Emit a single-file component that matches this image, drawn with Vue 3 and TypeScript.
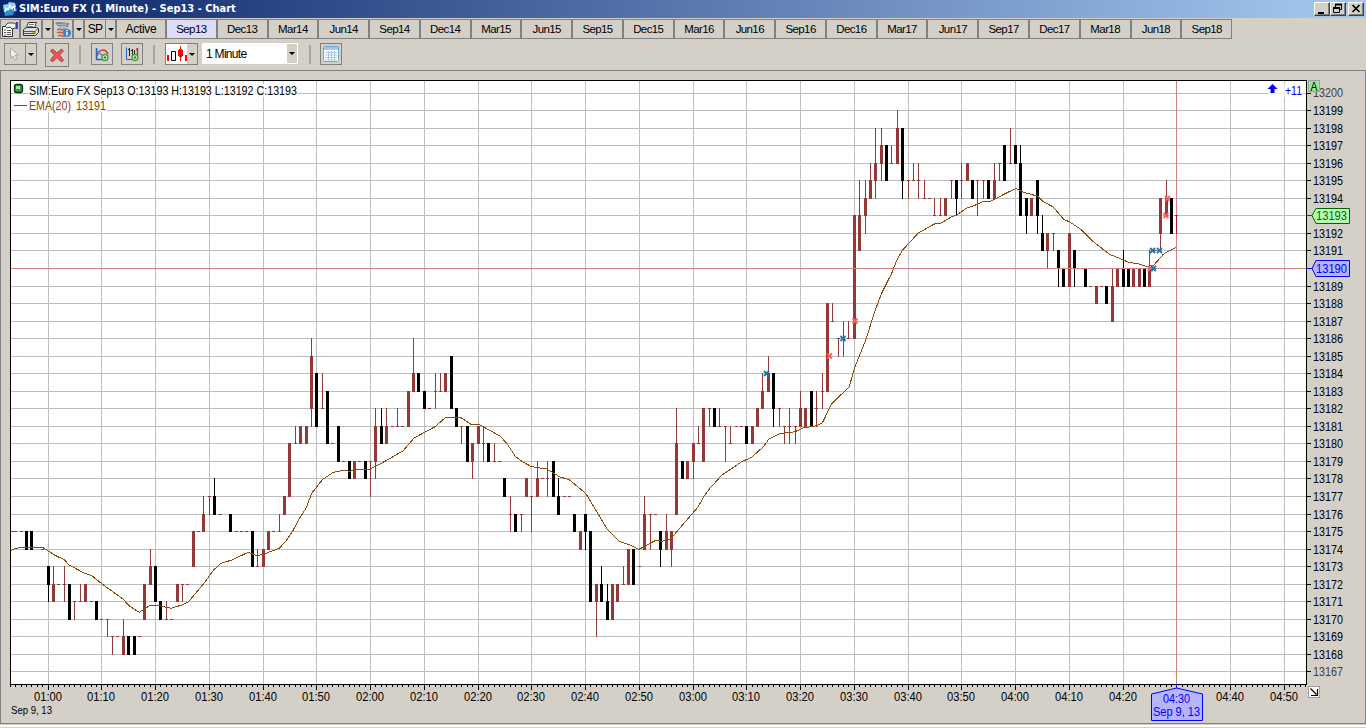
<script setup lang="ts">
type Kind = 'r' | 'b'
interface Candle { m: number; k: Kind; top: number; bot: number; hi: number; lo: number }

// minute:colour:body top-body bottom:high:low (prices above 13100, minutes since 01:00)
const raw = `-7r75 -6r75 -5r75 -4b75-74 -3b75-74 -1r74 0b73-72L71 1r72-71H73 2r72 3r72H73L71 4b72-70 5r71L70 6r71H72 7r72-71 8r71 9b71-70
10r70 11r70L69 12r69L68 13r69 14r69-68H70 15b69-68 16b69-68 17r69 18r72-70 19r73-72H74 20b73-71 21b71-70 22r70H71 23r70 24r72-71 25r72L71 26r72
27r75-73 28r75 29r76-75H77 30r77L76 31b77-76H78 32r76 34b76-75 35r75 36r75 37r75 38b75-73 39r73H74 40r74-73 41r75-74 42r75 43r75H76 44r77-76
45r80-77 46r80H81 47r81-80 48r81-80 49r85-82H86L81 50b84-81 51r82H84 52b83-80 53r80 54b81-79 55r79 56b79-78 57r79-78 58r79 59b79-78 60r79L77
61r81-79H82L78 62b81-80H82 63r81-80H82 64r81 65r81H82 66r81 67r83-81 68r84-83H86 69b84-83 70b83-82 71r82 72r83H84L82 73r83H84 74r84-83 75b85-82
76b82-81 77r81L80 78b81-79 79r80-79L78 80r81-80 81r80H81L79 82b80-79 83r79H80 84r79 85b78-77 86r76H77L75 87b76-75 88r76L75 89r78-77 90r77L75
91r78-77H79 92r78 93r78H79L77 94b79-77 95b77-76H78 96r77 97r77 98b76-75 99r75-74 100b76-75L74 101b75-71 102r72-71L69 103b72-71H73 104b71-70H72
105r72-70 106r72-71 107r72H73 108r74-72 109b74-72 110r73 111r76-74H77 112r76L74 113r76 114b75-74L73 115r75-74H76 116r75-74L73 117r80-76H82
118b79-78 119r79-78 120r80-79L78 121r80H81 122r82-79 123r82L81 124b82-81 125r81H82 126r81L79 127r80H81 128r81 129r81 130b81-80 131r81-80 132r82-81
133r83-82H84 134r84-83H85 135b84-82L81 136r82L81 137r81L80 138r81H82L80 139r81L80 140r82-81H83 141r82-81 142b83-81 143r82H83L81 144r83H84L82
145r88-83 146r87H88 147r86L85 148r86H87L85 149r86H87 150r93-86 151r93-91H95 152r94-93H95L92 153r95-94H96 154r96-95H98L94 155r97-96H98L95 156b97-95
157r96H97 158r98-96H99 159b98-95L94 160r95L94 161r95H96 162r95H96L94 163r94H95 164r94 165r93H94 166r93H94 167r94-93 168r95L94 169b95-94L93
170r95H96L94 171r96-95 172b95-94 173r95L93 174r95L94 175b95-94 176r95-94H96 177r96L95 178b97-95 179r96H98 180b97-96 181b96-93H97 182b94-93L92
183r94-93 184b95-93L92 185b92-91H93 186r92-91L90 187r92L91 188b91-90L89 189b90-89 190r92-89 191b91-90L89 192r90 193b90-89 194r89 195r89-88 196r89
197b89-88 198r89-87H90 199r90-89 200b90-89H91 201b90-89 202r90-89 203r90-89 204b90-89 205r90-89H91 206r91 207r94-92L91 208r94-93H95 209b94-92 210r93L92`

const candles: Candle[] = raw.split(/\s+/).map((s) => {
  const g = s.match(/^(-?\d+)([rb])(\d+)(?:-(\d+))?(?:H(\d+))?(?:L(\d+))?$/)!
  const top = +g[3]
  const bot = g[4] ? +g[4] : top
  return { m: +g[1], k: g[2] as Kind, top, bot, hi: g[5] ? +g[5] : top, lo: g[6] ? +g[6] : bot }
})

const X = (m: number): number => Math.floor(48 + 5.375 * m)
const Y = (p: number): number => Math.round(110.052 + (99 - p) * 17.545)

const ema = `10.7,550.7 15,548.7 20,547.4 42.7,547.4 55,555.3 64.3,559.7 68.7,564.7 83.3,572.7 91.7,575.7 101.7,583.7 123.3,599.3 129.3,606 139.3,612.3 150,605.4 158.3,605.4 171,608.3 182.7,604.7 188.3,602 204,583.3 213.3,570.3 220.7,563.3 231,560.3 248.3,552.3 256.7,555.7 263.3,554.3 279.3,548.3 286.7,540 293.3,530 299.7,518 306,508.3 311.7,493.3 322.3,479.7 333.3,472.3 343.3,470.3 350,471.3 360,469.3 368.3,470 376.7,465.7 386.7,460.3 403.3,450.7 414,438 435,426.7 445.7,417.4 460.7,417.4 471,424.3 480,425 500,436 506.7,443.3 515.7,456.7 523.3,462.3 531.7,466.7 546.7,469 560,477 569.3,479.7 586,493.7 607.3,529.3 619.3,541.3 630,545 639,549.3 655.7,540.3 661.7,541.3 671,538.7 677.3,531 698.3,506.7 703.7,496.7 710,488.3 721.7,475.3 741.7,461.7 751.7,457.3 763.3,446.7 769,439 779.3,433.7 795,431.7 803.3,428 816.7,425.7 822.3,423 831.7,403.7 849.3,386.7 854.3,368.7 865.7,340 875.3,310 881.5,293.5 891.7,273.3 897.3,259 902.7,250 918.3,233 935,223.7 941,223 951.7,216.7 956.7,215 966.7,208 973.3,206 982.7,201.7 990.7,201 1010,191.3 1016,188.5 1023.3,192.3 1037.3,196 1043.3,201.7 1053.3,207 1064,219.7 1069.3,221.7 1080.7,229.3 1093.3,241.7 1110,254.7 1118.3,257.7 1128.3,262.3 1138.3,263.7 1146.7,266.7 1154,265 1163.3,254.3 1167.3,251.7 1176.7,247.3`

const prices: number[] = Array.from({ length: 34 }, (_, i) => 100 - i)
const labelled: number[] = prices.filter((p) => p !== 93 && p !== 90)
const hours = Array.from({ length: 24 }, (_, i) => ({
  x: X(i * 10),
  label: `0${1 + Math.floor(i / 6)}:${i % 6}0`,
}))
const labelledHours = hours.filter((h) => h.label !== '04:30')
const minutes: number[] = Array.from({ length: 245 }, (_, i) => X(i - 7)).filter((x) => x < 1306)

const trades = [
  { x: 854.5, y: 320.5, c: 'sell' }, { x: 829, y: 355.5, c: 'sell' }, { x: 842.5, y: 338, c: 'buy' }, { x: 766, y: 373, c: 'buy' },
  { x: 1167, y: 198, c: 'sell' }, { x: 1165.5, y: 215, c: 'sell' }, { x: 1150, y: 268, c: 'sell' },
  { x: 1152, y: 250, c: 'buy' }, { x: 1159, y: 250, c: 'buy' }, { x: 1153, y: 268, c: 'buy' },
]

const tabs = ['Sep13', 'Dec13', 'Mar14', 'Jun14', 'Sep14', 'Dec14', 'Mar15', 'Jun15', 'Sep15', 'Dec15', 'Mar16', 'Jun16', 'Sep16', 'Dec16', 'Mar17', 'Jun17', 'Sep17', 'Dec17', 'Mar18', 'Jun18', 'Sep18']
</script>

<template>
  <div class="window">
    <header class="title">
      <svg class="logo" width="16" height="16" viewBox="0 0 16 16">
        <path d="M1 4l5-1 1-2 6 1 2 8-3 1-1 3-8 1z" fill="#2b8fd6" />
        <path d="M1 4l5-1 1-2 6 1 1 4-12 5z" fill="#8cc9f0" />
        <path d="M3 11l1-4 2 2 2-5 2 4 2-3 1 5" fill="none" stroke="#fff" stroke-width="1.2" />
      </svg>
      <h1>SIM:Euro FX (1 Minute) - Sep13 - Chart</h1>
      <div class="controls">
        <button><svg width="14" height="12" viewBox="0 0 14 12"><path d="M3 9h6v2H3z" /></svg></button>
        <button><svg width="14" height="12" viewBox="0 0 14 12" fill="none" stroke="#000"><path d="M4.500 4V1.500h6v5H9" /><path d="M4 1.500h7" stroke-width="2" /><path d="M2.500 5.500h6v4h-6z" /><path d="M2 5h7" stroke-width="2" /></svg></button>
        <button class="close"><svg width="14" height="12" viewBox="0 0 14 12"><path d="M3.500 2l7 7M10.500 2l-7 7" stroke="#000" stroke-width="1.700" /></svg></button>
      </div>
    </header>

    <nav class="tabs">
      <span class="tool w20"><svg width="18" height="18" viewBox="0 0 18 18">
        <path d="M1.500 6.500h10v10h-10z" fill="#fff" stroke="#333" /><path d="M3 10h2M3 12.500h2M3 15h2M6 10.500h4M6 12.500h4M6 14.500h4" stroke="#555" />
        <path d="M4 6l3-3h6l2 1v4l-4 1-2-2-3 1z" fill="#f4f4f4" stroke="#444" /><path d="M15 2h2v7h-2z" fill="#4040a8" />
      </svg></span>
      <span class="tool w21"><svg width="18" height="18" viewBox="0 0 18 18">
        <path d="M6.500 2.500h8l-2 5h-8z" fill="#fff" stroke="#333" /><path d="M7 4.500h5M6 6.500h5" stroke="#777" />
        <path d="M1.500 9.500l3-2h10l2 1v4l-3 3h-12z" fill="#ddd" stroke="#333" /><path d="M2 11.500h11l3-3M2 13.500h11v-2" fill="none" stroke="#555" /><path d="M10 12.500h2" stroke="#cc0" />
      </svg></span>
      <span class="tool arrow w11"><i /></span>
      <span class="tool w20"><svg width="18" height="18" viewBox="0 0 18 18">
        <path d="M1 3l4-1 10 1-1 4-7 2z" fill="#76838c" /><path d="M4 4.500l9-.500M5 6.500l8-.500" stroke="#b8c4cc" />
        <path d="M6 6l8 1v6l-7 1z" fill="#aebfd8" />
        <path d="M3 10c3-2 4 1 8-1M3 13c3-2 4 1 8-1M4 16c3-2 4 1 7 0" fill="none" stroke="#d0584a" stroke-width="1.500" />
        <circle cx="13" cy="13" r="4" fill="#3f80d0" /><path d="M13 12v3.500M13 10v1.200" stroke="#fff" stroke-width="1.500" />
      </svg></span>
      <span class="tool arrow w11"><i /></span>
      <span class="tool sp w22">SP</span>
      <span class="tool arrow w11"><i /></span>
      <span class="tab active-link">Active</span>
      <div class="months">
        <span v-for="(t, i) in tabs" :key="t" class="tab" :class="{ on: i === 0 }">{{ t }}</span>
      </div>
    </nav>

    <div class="tools">
      <span class="btn pointer"><svg width="14" height="18" viewBox="0 0 14 18"><path d="M2.500 3v10l2.500-2 2 4 2-1-2-4h3.500z" fill="#f0f0f0" stroke="#a8a8a8" /></svg></span>
      <span class="btn drop joined"><i /></span>
      <span class="btn del"><svg width="18" height="18" viewBox="0 0 18 18"><path d="M4.500 3l4.500 4 4.500-4 2 2-4 4 4 5-2 2-4.500-4.500-4.500 4.500-2-2 4-5-4-4z" fill="#ea5a5a" stroke="#a83030" stroke-width=".9" /></svg></span>
      <span class="sep s1" />
      <span class="btn ic1"><svg width="16" height="16" viewBox="0 0 16 16"><path d="M2.500 2v11.500H14" fill="none" stroke="#2464c0" stroke-width="1.500" /><path d="M3 10c1-4 3-6 6-6 2 0 4 2 5 4" fill="none" stroke="#d04040" stroke-width="1.700" /><path d="M3 5l7 6" stroke="#5090e0" stroke-width="1.500" /><circle cx="11" cy="11.500" r="3" fill="#dcecd8" stroke="#4a9e3a" stroke-width="1.300" /><path d="M9.500 11.500h3M11 10v3" stroke="#3c8c2c" stroke-width="1.200" /></svg></span>
      <span class="btn ic2"><svg width="16" height="16" viewBox="0 0 16 16"><path d="M2.500 1.500v12H14" fill="none" stroke="#2464c0" /><path d="M5.500 2v8M4 3.500h1.500M8.500 3v7M7 4.500h1.500M10.500 4v5" stroke="#222" /><path d="M13.500 2v8M12 3.500h1.500" stroke="#d02020" stroke-width="1.300" /><circle cx="11" cy="11.500" r="3" fill="#dcecd8" stroke="#4a9e3a" stroke-width="1.300" /><path d="M9.500 11.500h3M11 10v3" stroke="#3c8c2c" stroke-width="1.200" /></svg></span>
      <span class="sep s2" />
      <span class="btn candles"><svg width="21" height="20" viewBox="0 0 21 20"><path d="M0 0h21v20H0z" fill="#fff" /><path d="M1 11h2v6H1zM19 11h2v6h-2z" fill="#f00" /><path d="M5.500 7.500h4v9h-4z" fill="#fff" stroke="#000" /><path d="M14.500 2v15" stroke="#f00" /><path d="M13 5h3v1h1v6h-1v1h-3v-1h-1V6h1z" fill="#f00" /></svg></span>
      <span class="btn drop2 joined"><i /></span>
      <div class="select"><span>1 Minute</span><b><i /></b></div>
      <span class="sep s3" />
      <span class="btn table"><svg width="18" height="18" viewBox="0 0 18 18"><rect x="1.500" y="1.500" width="15" height="15" rx="1" fill="#fff" stroke="#6ea6d8" /><path d="M2 2h14v3H2z" fill="#9cc4ea" /><path d="M3 4.500h12" stroke="#b5dc9c" /><path d="M3 7.500h12M3 10h12M3 12.500h12M3 15h12M6.500 6v9.500M9.500 6v9.500M12.500 6v9.500" stroke="#a9c6e2" /></svg></span>
    </div>

    <main class="panel">
      <svg width="1366" height="658" viewBox="0 70 1366 658" class="chart">
        <g shape-rendering="crispEdges">
          <path d="M0 70.500H1365.500V723.500H.5V70.500" fill="none" stroke="#808080" />
          <path d="M0 725.500H1366M0 726.500H1366" stroke="#fff" />
          <rect x="10" y="80" width="1297" height="605" fill="#fff" />
          <rect v-for="p in prices" :key="'h' + p" x="11" :y="Y(p)" width="1295" height="1" class="grid" />
          <rect v-for="h in hours" :key="'v' + h.x" :x="h.x" y="81" width="1" height="603" class="grid" />
          <g v-for="c in candles" :key="c.m" :class="c.k">
            <rect :x="X(c.m)" :y="Y(c.hi)" width="1" :height="Y(c.lo) - Y(c.hi) + 1" />
            <rect :x="Math.max(11, X(c.m) - 1)" :y="Y(c.top)" width="3" :height="Y(c.bot) - Y(c.top) + 1" />
          </g>
          <polyline :points="ema" class="ema" />
          <rect x="11" y="268" width="1296" height="1" class="cross" />
          <rect x="1176" y="81" width="1" height="603" class="cross" />
          <rect x="1176" y="215" width="1" height="19" fill="#c01818" />
          <path d="M10.500 80V685M10 80.500H1307M1306.500 80V685M10 684.500H1307" stroke="#000" />
          <rect v-for="p in prices" :key="'t' + p" x="1307" :y="Y(p)" width="4" height="1" />
          <rect v-for="x in minutes" :key="'m' + x" :x="x" y="685" width="1" height="2" />
          <rect v-for="h in hours" :key="'j' + h.x" :x="h.x" y="685" width="1" height="5" />
        </g>

        <path v-for="(t, i) in trades" :key="'x' + i" :class="t.c" :d="`M${t.x - 2} ${t.y - 2}l5 5m0 -5l-5 5`" class="trade" />

        <g>
          <rect x="28" y="84" width="270" height="13" class="veil" />
          <rect x="13" y="99" width="94" height="13" class="veil" />
          <rect x="1268" y="84" width="35" height="13" class="veil" />
          <rect x="14.500" y="84.500" width="8" height="8" rx="2" fill="#3c9a3c" stroke="#0a320a" stroke-width="1.300" />
          <rect x="16" y="86" width="4" height="3" fill="#a4e0a0" />
          <text x="29" y="95" textLength="268" lengthAdjust="spacingAndGlyphs">SIM:Euro FX Sep13 O:13193 H:13193 L:13192 C:13193</text>
          <path d="M14 105.500h13" stroke="#8b4500" shape-rendering="crispEdges" />
          <text x="29" y="110" textLength="42" lengthAdjust="spacingAndGlyphs" class="brown">EMA(20)</text>
          <text x="76" y="110" textLength="30" lengthAdjust="spacingAndGlyphs" class="brown">13191</text>
          <path d="M1272.500 84l5 5h-3v4h-4v-4h-3z" fill="#00f" />
          <text x="1285" y="95" textLength="17" lengthAdjust="spacingAndGlyphs" fill="#0000e0">+11</text>
        </g>

        <text v-for="p in labelled" :key="'p' + p" x="1313" :y="Y(p) + 5 - (p === 100 ? 1 : 0)" textLength="30" lengthAdjust="spacingAndGlyphs" :fill="p === 100 || p === 67 ? '#404040' : '#000'">{{ 13100 + p }}</text>
        <text v-for="h in labelledHours" :key="'l' + h.x" :x="h.x - 14" y="701" textLength="28" lengthAdjust="spacingAndGlyphs">{{ h.label }}</text>
        <text x="11" y="714" class="small" textLength="41" lengthAdjust="spacingAndGlyphs">Sep 9, 13</text>

        <rect x="1308.500" y="80.500" width="11" height="11" fill="#90ee90" stroke="#a0a0a0" />
        <text x="1310.500" y="91" textLength="7" lengthAdjust="spacingAndGlyphs">A</text>

        <path d="M1307 215.500h5l4-7h33.500v15h-33.500l-4-8" class="tag green" />
        <text x="1316" y="220" textLength="31" lengthAdjust="spacingAndGlyphs" fill="#006400">13193</text>
        <path d="M1307 268.500h5l4-8h33.500v16h-33.500l-4-8" class="tag blue" />
        <text x="1316" y="273" textLength="31" lengthAdjust="spacingAndGlyphs" fill="#00f">13190</text>

        <path d="M1176.500 684v4l26 6v26.500h-51V694l25-6" class="tag blue" />
        <text x="1163" y="703" textLength="27" lengthAdjust="spacingAndGlyphs" fill="#00f">04:30</text>
        <text x="1153" y="716" textLength="47" lengthAdjust="spacingAndGlyphs" fill="#00f">Sep 9, 13</text>

        <rect x="1308.500" y="686.500" width="11" height="11" fill="#fff" stroke="#a0a0a0" />
        <path d="M1310.500 688.500l6 6M1317.500 689v6.500h-6.500" fill="none" stroke="#000" stroke-width="1.200" />
      </svg>
    </main>
  </div>
</template>

<style>
body { margin: 0; overflow: hidden; background: #d4d0c8; }
</style>

<style scoped>
.window { width: 1366px; height: 728px; display: flex; flex-direction: column; background: #d4d0c8; font: 12px/18px "Liberation Sans", Arial, sans-serif; color: #000; }
.title { height: 18px; display: flex; align-items: center; background: linear-gradient(90deg, #0a246a, #a6caf0); }
.logo { margin-left: 2px; }
h1 { margin: 0 0 0 1px; font: bold 11px/18px "DejaVu Sans Condensed", "DejaVu Sans", sans-serif; color: #fff; white-space: nowrap; letter-spacing: 0; }
.controls { margin-left: auto; margin-right: 2px; display: flex; }
button { width: 16px; height: 14px; padding: 0; border: 1px solid; border-color: #fff #404040 #404040 #fff; background: #d4d0c8; box-shadow: inset -1px -1px #808080; display: flex; }
.close { margin-left: 2px; }
button svg { display: block; }
.tabs { height: 20px; margin-top: 1px; display: flex; }
.tool, .tab { box-sizing: border-box; height: 20px; border: 1px solid #808080; display: flex; align-items: center; justify-content: center; letter-spacing: -0.75px; white-space: nowrap; overflow: hidden; }
.months .tab { letter-spacing: -0.6px; font-size: 11.5px; }
.w20 { width: 20px; } .w21 { width: 22px; } .w11 { width: 11px; } .w22 { width: 21px; }
.sp { border-right: 0; letter-spacing: -0.8px; }
.tab.active-link { width: 50px; letter-spacing: -0.3px; }
.months { width: 1066px; display: flex; }
.months .tab { flex: 1; }
.on { background: #dcdcfa; }
i { display: block; border: 3px solid transparent; border-top-color: #000; border-bottom: 0; width: 0; height: 0; }
.tools { height: 31px; padding-top: 4px; box-sizing: border-box; display: flex; align-items: flex-start; }
.btn { box-sizing: border-box; height: 22px; border: 1px solid #808080; display: flex; align-items: center; justify-content: center; overflow: hidden; flex: none; }
.joined { border-left: 0; }
.pointer { margin-left: 4px; width: 22px; } .drop { width: 11px; }
.del { margin-left: 8px; width: 24px; height: 24px; }
.sep { width: 2px; height: 19px; margin-top: 2px; background: #a8a6a4; flex: none; }
.s1 { margin-left: 10px; } .ic1 { margin-left: 10px; width: 22px; } .ic2 { margin-left: 8px; width: 22px; }
.s2 { margin-left: 10px; }
.btn.candles { margin-left: 10px; width: 22px; border-right: 0; }
.drop2 { width: 11px; }
.select { margin-left: 4px; width: 96px; height: 21px; background: #fff; display: flex; justify-content: space-between; align-items: center; letter-spacing: -0.7px; }
.select span { margin-left: 4px; }
.select b { width: 10px; height: 19px; margin-right: 1px; background: #d4d0c8; display: flex; align-items: center; justify-content: center; }
.s3 { margin-left: 11px; } .table { margin-left: 9px; width: 22px; }
.panel { flex: 1; }
.chart { display: block; }
.chart text { font-size: 12px; font-family: "Liberation Sans", Arial, sans-serif; }
.chart .small { font-size: 11px; }
.grid { fill: #bebebe; }
.r { fill: #953735; }
.b { fill: #000; }
.brown { fill: #8b4500; }
.ema { fill: none; stroke: #8f4a08; stroke-width: 1; }
.cross { fill: #d08080; }
.trade { fill: none; stroke-width: 1.800; }
.sell { stroke: #ff5a5a; }
.buy { stroke: #1878b0; }
.veil { fill: #fff; fill-opacity: .7; }
.tag { stroke-width: 1; }
.green { fill: #b4ffb4; stroke: #006400; }
.blue { fill: #b4b4ff; stroke: #00f; }
</style>
